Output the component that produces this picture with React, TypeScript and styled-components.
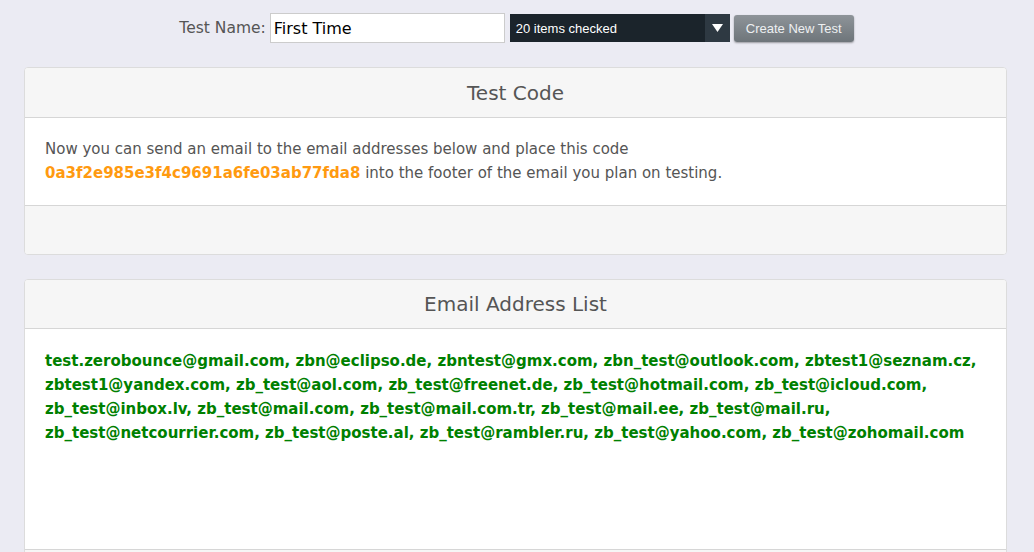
import React from 'react';
import styled, { createGlobalStyle } from 'styled-components';

const GlobalStyle = createGlobalStyle`
    html, body {
        margin: 0;
        padding: 0;
        background-color: #ebebf3;
        font-family: "DejaVu Sans", "Open Sans", sans-serif;
    }
`

const emails = [
    'test.zerobounce@gmail.com', 'zbn@eclipso.de', 'zbntest@gmx.com', 'zbn_test@outlook.com',
    'zbtest1@seznam.cz', 'zbtest1@yandex.com', 'zb_test@aol.com', 'zb_test@freenet.de',
    'zb_test@hotmail.com', 'zb_test@icloud.com', 'zb_test@inbox.lv', 'zb_test@mail.com',
    'zb_test@mail.com.tr', 'zb_test@mail.ee', 'zb_test@mail.ru', 'zb_test@netcourrier.com',
    'zb_test@poste.al', 'zb_test@rambler.ru', 'zb_test@yahoo.com', 'zb_test@zohomail.com',
];

const Card: React.FC<{ title:string, bodyHeight:number, headerHeight:number, children?:React.ReactNode }> = ({ title, bodyHeight, headerHeight, children }) => {
    return (
        <StyledCard>
            <StyledCardHeader height={ headerHeight }>{ title }</StyledCardHeader>
            <StyledCardBody minHeight={ bodyHeight }>{ children }</StyledCardBody>
            <StyledCardFooter />
        </StyledCard>
    );
};

export default function App() {
    return (
        <StyledPage>
            <GlobalStyle />
            <StyledToolbar>
                <StyledLabel>Test Name:</StyledLabel>
                <StyledInput defaultValue="First Time" />
                <StyledSelect>
                    <StyledSelectText>20 items checked</StyledSelectText>
                    <StyledSelectArrow>
                        <svg width="11" height="8" viewBox="0 0 11 8">
                            <path d="M0 0 L11 0 L5.5 8 Z" fill="#fff" />
                        </svg>
                    </StyledSelectArrow>
                </StyledSelect>
                <StyledButton>Create New Test</StyledButton>
            </StyledToolbar>
            <Card title="Test Code" headerHeight={ 49 } bodyHeight={ 87 }>
                <StyledText>
                    Now you can send an email to the email addresses below and place this code<br />
                    <StyledCode>0a3f2e985e3f4c9691a6fe03ab77fda8</StyledCode> into the footer of the email you plan on testing.
                </StyledText>
            </Card>
            <Card title="Email Address List" headerHeight={ 48 } bodyHeight={ 220 }>
                <StyledEmails>{ emails.join(', ') }</StyledEmails>
            </Card>
        </StyledPage>
    );
}

const StyledPage = styled.div`
    display: flex;
    flex-direction: column;
    gap: 24px;
    padding: 12px 27px 0 24px;
`
const StyledToolbar = styled.div`
    display: flex;
    align-items: center;
    justify-content: center;
    gap: 4px;
    height: 32px;
    margin-bottom: -1px;
    padding-left: 2px;
`
const StyledLabel = styled.span`
    color: #555;
    font-size: 15.5px;
`
const StyledInput = styled.input`
    box-sizing: border-box;
    width: 235px;
    height: 30px;
    margin: 0 1px 0 0;
    padding: 0 3px;
    border: 1px solid #ccc;
    color: #000;
    background: #fff;
    font-family: "DejaVu Sans", sans-serif;
    font-size: 16px;
    outline: none;
`
const StyledSelect = styled.div`
    display: flex;
    width: 220px;
    height: 28px;
    background-color: #1b242b;
`
const StyledSelectText = styled.div`
    flex: 1;
    display: flex;
    align-items: center;
    padding-left: 6px;
    color: #fff;
    font-family: "Liberation Sans", Arial, sans-serif;
    font-size: 13px;
`
const StyledSelectArrow = styled.div`
    display: flex;
    align-items: center;
    justify-content: center;
    width: 25px;
    background-color: #2e3942;
`
const StyledButton = styled.button`
    height: 27px;
    padding: 0 12px;
    border: none;
    border-radius: 3px;
    color: #eef0f2;
    background: linear-gradient(#8e9499, #6e757a);
    box-shadow: 0 1px 2px rgba(0, 0, 0, 0.35);
    font-family: "Liberation Sans", Arial, sans-serif;
    font-size: 13px;
`
const StyledCard = styled.div`
    display: flex;
    flex-direction: column;
    border: 1px solid #dcdcdc;
    border-radius: 4px;
    background-color: #fff;
    overflow: hidden;
`
const StyledCardHeader = styled.div<{ height:number }>`
    display: flex;
    align-items: center;
    justify-content: center;
    height: ${ props => props.height }px;
    border-bottom: 1px solid #d6d6d6;
    color: #555;
    background-color: #f6f6f6;
    font-size: 20px;
`
const StyledCardBody = styled.div<{ minHeight:number }>`
    box-sizing: border-box;
    min-height: ${ props => props.minHeight }px;
    padding: 19px 20px;
`
const StyledCardFooter = styled.div`
    height: 48px;
    border-top: 1px solid #d6d6d6;
    background-color: #f6f6f6;
`
const StyledText = styled.p`
    margin: 0;
    color: #555;
    font-size: 15px;
    line-height: 24px;
`
const StyledCode = styled.span`
    color: #ff9a10;
    font-weight: bold;
`
const StyledEmails = styled.p`
    margin: 0;
    padding-top: 1px;
    color: #008000;
    font-size: 15px;
    font-weight: bold;
    line-height: 24px;
`
